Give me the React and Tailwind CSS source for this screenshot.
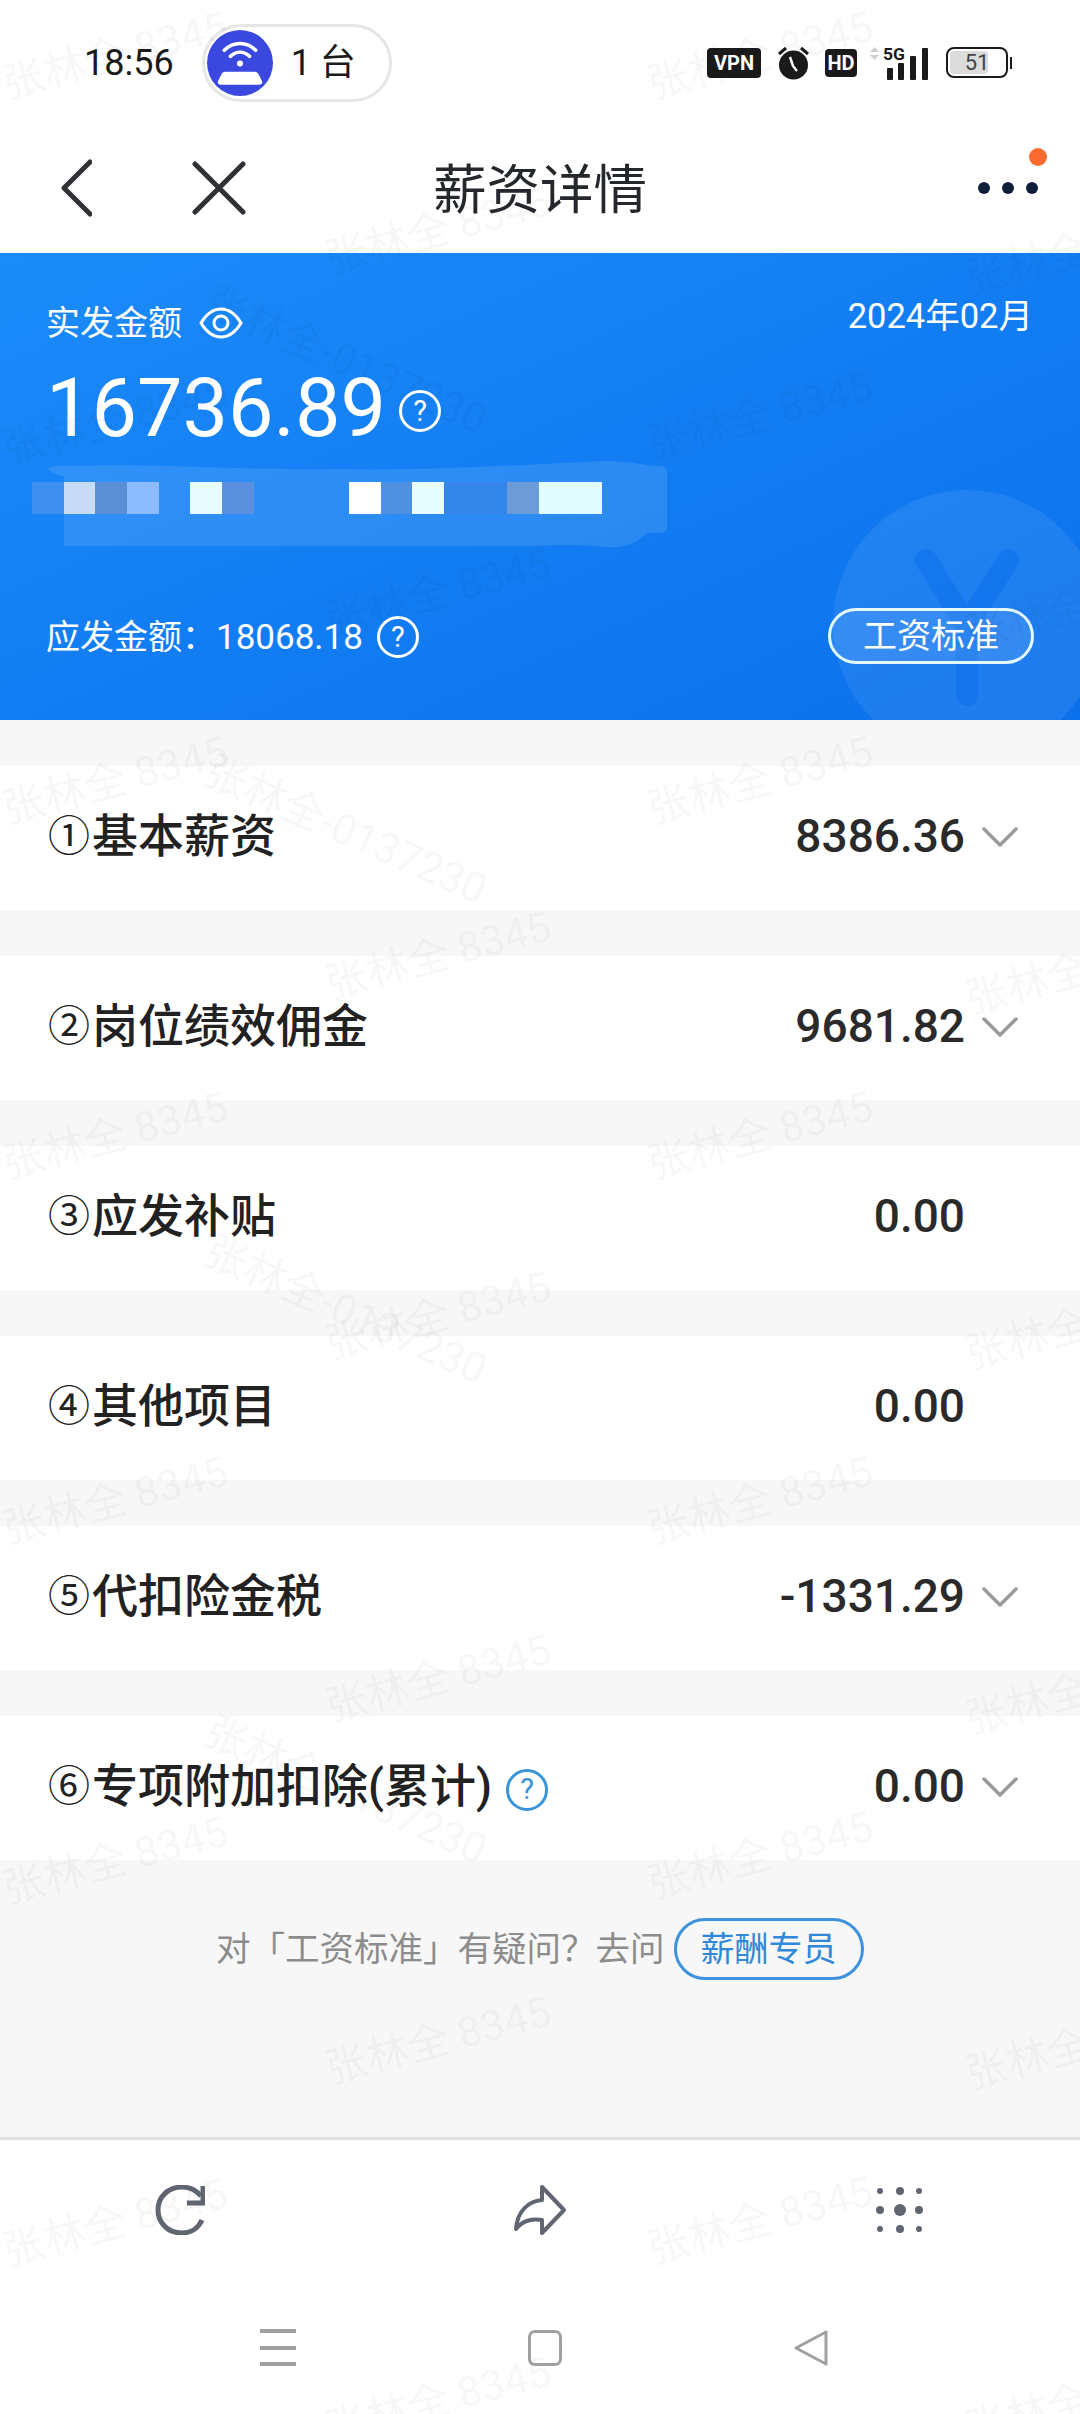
import React from "react";

const cjk = "font-['Roboto','Noto_Sans_CJK_SC',sans-serif]";

// left column / right column watermark centres, alternating rows
const marks = [
  [115, 55], [760, 55], [438, 230], [1078, 250], [115, 420], [760, 415], [438, 592], [1078, 605],
  [115, 780], [760, 780], [438, 955], [1078, 970], [115, 1135], [760, 1135], [438, 1315], [1078, 1325],
  [115, 1500], [760, 1500], [438, 1678], [1078, 1690], [115, 1860], [760, 1855], [438, 2040], [1078, 2045],
  [115, 2222], [760, 2220], [438, 2400], [1078, 2400],
];
const idMarks = [[346, 360], [346, 830], [346, 1310], [346, 1790]];

const rows = [
  { mark: "①", label: "基本薪资", value: "8386.36", open: true },
  { mark: "②", label: "岗位绩效佣金", value: "9681.82", open: true },
  { mark: "③", label: "应发补贴", value: "0.00" },
  { mark: "④", label: "其他项目", value: "0.00" },
  { mark: "⑤", label: "代扣险金税", value: "-1331.29", open: true },
  { mark: "⑥", label: "专项附加扣除(累计)", value: "0.00", open: true, help: true },
];

const cells = [
  "bg-[#3f8ff0]", "bg-[#c8dcf8]", "bg-[#5b8fd6]", "bg-[#8cbcff]", "bg-transparent", "bg-[#e8fcff]",
  "bg-[#5a90de]", "bg-transparent", "bg-transparent", "bg-transparent", "bg-[#ffffff]", "bg-[#4f90e0]",
  "bg-[#e8fdff]", "bg-[#3486ea]", "bg-[#3486ea]", "bg-[#6d9bd8]", "bg-[#e2fdff]", "bg-[#e2fdff]",
];

const Help = ({ className }) => (
  <span className={`flex h-[42px] w-[42px] shrink-0 items-center justify-center rounded-full border-[3px] text-[29px] leading-none font-['Roboto',sans-serif] ${className}`}>
    ?
  </span>
);

const Chevron = () => (
  <svg width="36" height="20" viewBox="0 0 36 20" fill="none" stroke="#9a9a9a" strokeWidth="3.5" strokeLinecap="round" strokeLinejoin="round">
    <path d="M2 2 18 18 34 2" />
  </svg>
);

const StatusIcons = () => (
  <div className="flex items-center">
    <span className="flex h-[30px] w-[54px] items-center justify-center rounded-[4px] bg-[#1a1a1a] text-[20px] font-bold text-white font-['Roboto',sans-serif]">VPN</span>
    <svg className="ml-[17px]" width="31" height="34" viewBox="0 0 31 34" fill="#1a1a1a">
      <circle cx="15.5" cy="19" r="14.5" />
      <path d="M12 11 15 20l4 5" fill="none" stroke="#fff" strokeWidth="2.5" />
      <path d="M1 8 8 2M30 8 23 2" stroke="#1a1a1a" strokeWidth="3" />
    </svg>
    <span className="ml-[16px] flex h-[28px] w-[32px] items-center justify-center rounded-[4px] bg-[#1a1a1a] text-[20px] font-bold text-white font-['Roboto',sans-serif]">HD</span>
    <svg className="ml-[13px]" width="59" height="34" viewBox="0 0 59 34" fill="#1a1a1a">
      <path d="M0 6 4.500 1 9 6ZM0 9 4.500 14 9 9Z" fill="#cfcfcf" />
      <rect x="17" y="22" width="6" height="12" rx="1" />
      <rect x="28" y="17" width="6" height="17" rx="1" />
      <rect x="40" y="10" width="6" height="24" rx="1" />
      <rect x="52" y="2" width="6" height="32" rx="1" />
      <text x="13" y="14" fontSize="17" fontWeight="700" fontFamily="Roboto" textLength="22" lengthAdjust="spacingAndGlyphs">5G</text>
    </svg>
    <div className="ml-[17px] flex items-center">
      <div className="relative flex h-[31px] w-[62px] items-center justify-center overflow-hidden rounded-[8px] border-[2px] border-[#1a1a1a] p-[2px]">
        <div className="absolute bottom-[2px] left-[2px] top-[2px] w-[38px] rounded-[4px] bg-[#dcdcdc]" />
        <span className="relative text-[22px] text-[#444] font-['Roboto',sans-serif]">51</span>
      </div>
      <div className="ml-[2px] h-[12px] w-[2px] bg-[#1a1a1a]" />
    </div>
  </div>
);

const Row = ({ mark, label, value, open, help }) => (
  <div className="mt-[46px] flex h-[144px] items-center justify-between bg-white pb-[3px] pl-[48px] pr-[62px]">
    <div className="flex items-center">
      <span className={`w-[44px] text-[42px] text-[#222] ${cjk}`}>{mark}</span>
      <span className={`text-[46px] font-medium text-[#222] ${cjk}`}>{label}</span>
      {help && <Help className="ml-[14px] mt-[6px] border-[#3a95d8] text-[#3a95d8]" />}
    </div>
    <div className="flex items-center">
      <span className="text-[46px] font-medium text-[#2a2a2a] font-['Roboto',sans-serif]">{value}</span>
      <div className="ml-[17px] flex w-[36px] justify-center">{open && <Chevron />}</div>
    </div>
  </div>
);

export default function App() {
  return (
    <div className={`relative flex h-[2414px] w-[1080px] flex-col overflow-hidden bg-[#f7f7f7] ${cjk}`}>
      <div className="bg-white">
        {/* status bar */}
        <div className="flex h-[124px] items-center justify-between pl-[84px] pr-[68px] pt-[1px]">
          <div className="flex items-center">
            <span className="text-[36px] text-[#1a1a1a]">18:56</span>
            <div className="ml-[28px] flex h-[78px] w-[190px] items-center rounded-full border-[3px] border-[#e6e6e6] pl-[2px]">
              <svg width="66" height="66" viewBox="0 0 65 65">
                <circle cx="32.500" cy="32.500" r="32.500" fill="#3a48e0" />
                <path d="M17 20c9-9 22-9 31 0M23 26c6-5.500 13-5.500 19 0" fill="none" stroke="#fff" strokeWidth="3.500" strokeLinecap="round" />
                <circle cx="32.500" cy="33" r="3" fill="#fff" />
                <path d="M18 41h29c2 0 3 1 4 3l3 6c1 2 0 4-3 4H14c-3 0-4-2-3-4l3-6c1-2 2-3 4-3Z" fill="#fff" />
              </svg>
              <span className="ml-[18px] text-[36px] text-[#1a1a1a]">1 台</span>
            </div>
          </div>
          <StatusIcons />
        </div>
        {/* nav bar */}
        <div className="relative flex h-[129px] items-center pl-[61px] pr-[42px]">
          <svg className="-mt-[2px]" width="31" height="58" viewBox="0 0 31 58" fill="none" stroke="#2f3337" strokeWidth="5" strokeLinecap="round" strokeLinejoin="round">
            <path d="M29 3 3 29l26 26" />
          </svg>
          <svg className="-mt-[2px] ml-[100px]" width="54" height="54" viewBox="0 0 54 54" fill="none" stroke="#2f3337" strokeWidth="5" strokeLinecap="round">
            <path d="M3 3 51 51M51 3 3 51" />
          </svg>
          <span className="ml-[187px] mt-[4px] text-[53.500px] leading-none text-[#24282c]">薪资详情</span>
          <div className="-mt-[2px] ml-auto flex gap-[12px]">
            <span className="h-[12px] w-[12px] rounded-full bg-[#10203a]" />
            <span className="h-[12px] w-[12px] rounded-full bg-[#10203a]" />
            <span className="h-[12px] w-[12px] rounded-full bg-[#10203a]" />
          </div>
          <span className="absolute right-[33px] top-[24px] h-[18px] w-[18px] rounded-full bg-[#fb6a2f]" />
        </div>
      </div>

      {/* blue summary */}
      <div className="relative h-[467px] overflow-hidden bg-gradient-to-br from-[#1b8bfa] to-[#0b70ec] px-[46px] text-white">
        <svg className="absolute left-[833px] top-[237px]" width="268" height="268" viewBox="0 0 268 268" fill="none">
          <circle cx="134" cy="134" r="134" fill="#ffffff" fillOpacity="0.08" />
          <path d="M93 70 134 135 175 70M134 135V205" stroke="#0b70ec" strokeOpacity="0.55" strokeWidth="22" strokeLinecap="round" strokeLinejoin="round" />
        </svg>
        <svg className="absolute left-[47px] top-[208px]" width="625" height="95" viewBox="0 0 625 95" fill="#ffffff" fillOpacity="0.11">
          <path d="M0 8C2 6 10 4 17 5 120 2 200 10 290 8 380 10 470 4 560 0 590 1 600 5 612 5 618 5 620 8 620 12V66C620 70 617 72 612 72H600C590 82 575 88 560 86 540 84 520 84 480 85H17V15Q8 14 0 8Z" />
        </svg>

        <div className="relative flex items-center justify-between pt-[43px]">
          <div className="flex items-center">
            <span className="text-[34px] leading-[54px]">实发金额</span>
            <svg className="ml-[17px]" width="44" height="32" viewBox="0 0 44 32" fill="none" stroke="#fff" strokeWidth="3">
              <path d="M2 16C8 6 15 2 22 2s14 4 20 14c-6 10-13 14-20 14S8 26 2 16Z" />
              <circle cx="22" cy="16" r="7" />
            </svg>
          </div>
          <span className="-mt-[14px] mr-[1px] text-[34.500px] leading-none">2024年02月</span>
        </div>
        <div className="relative mt-[12px] flex items-center">
          <span className="text-[81px] leading-[94px] font-['Roboto',sans-serif]">16736.89</span>
          <Help className="ml-[13px] mt-[4px] border-white text-white" />
        </div>

        {/* redacted line */}
        <div className="relative -ml-[14px] mt-[26px] flex h-[32px]">
          {cells.map((c, i) => (
            <span key={i} className={`h-full w-[31.700px] ${c}`} />
          ))}
        </div>

        <div className="relative mt-[94px] flex items-center justify-between">
          <div className="flex items-center">
            <span className="mt-[2px] text-[34px] leading-none">应发金额：</span>
            <span className="mt-[2px] text-[35px] leading-none font-['Roboto',sans-serif]">18068.18</span>
            <Help className="ml-[14px] mt-[2px] border-white text-white" />
          </div>
          <span className="flex h-[56px] w-[206px] items-center justify-center rounded-full border-[3px] border-[#e4fbff] bg-white/10 text-[34px] leading-none">
            工资标准
          </span>
        </div>
      </div>

      {/* pay rows */}
      <div className="flex flex-1 flex-col">
        {rows.map((r) => (
          <Row key={r.label} {...r} />
        ))}
        <div className="mt-[58px] flex items-center pl-[216px]">
          <span className="text-[34.500px] leading-none text-[#8c8c8c]">对「工资标准」有疑问？去问</span>
          <span className="ml-[9px] flex h-[62px] w-[190px] items-center justify-center rounded-full border-[3px] border-[#3d92db] text-[34px] leading-none text-[#2f88d8]">
            薪酬专员
          </span>
        </div>
      </div>

      {/* toolbar + system nav */}
      <div className="h-[277px] border-t-[3px] border-[#e2e2e2] bg-white">
        <div className="flex h-[139px] items-center justify-between px-[155px]">
          <svg width="50" height="50" viewBox="0 0 50 50" fill="none" stroke="#5f6672" strokeWidth="5">
            <path d="M47 35C43 44 35 48 27 48 13 48 3 38 3 25S13 2 27 2c7 0 14 3 19 9" />
            <path d="M48 1V18H32" strokeWidth="5" />
          </svg>
          <svg width="52" height="50" viewBox="0 0 52 50" fill="none" stroke="#5f6672" strokeWidth="4" strokeLinejoin="round">
            <path d="M28 2 50 25 28 48V35C18 33 8 36 2 44 3 27 14 16 28 15Z" />
          </svg>
          <svg width="50" height="50" viewBox="0 0 50 50" fill="#5f6672">
            <circle cx="5" cy="6" r="3" /><circle cx="25" cy="6" r="4" /><circle cx="44" cy="6" r="3" />
            <circle cx="5" cy="25" r="4" /><circle cx="25" cy="25" r="6" /><circle cx="44" cy="25" r="4" />
            <circle cx="5" cy="44" r="3" /><circle cx="25" cy="44" r="4" /><circle cx="44" cy="44" r="3" />
          </svg>
        </div>
        <div className="flex items-center justify-between pl-[260px] pr-[252px] pt-[50px]">
          <div className="flex h-[37px] w-[36px] flex-col justify-between">
            <span className="h-[4px] bg-[#a0a0a0]" />
            <span className="h-[4px] bg-[#a0a0a0]" />
            <span className="h-[4px] bg-[#a0a0a0]" />
          </div>
          <span className="h-[36px] w-[34px] rounded-[7px] border-[3px] border-[#a0a0a0]" />
          <svg width="34" height="36" viewBox="0 0 34 36" fill="none" stroke="#a0a0a0" strokeWidth="3" strokeLinejoin="round">
            <path d="M32 2V34L2 18Z" />
          </svg>
        </div>
      </div>

      {/* watermark layer */}
      <div className="pointer-events-none absolute inset-0 overflow-hidden">
        {marks.map(([x, y]) => (
          <span
            key={`${x}-${y}`}
            className="absolute -translate-x-1/2 -translate-y-1/2 -rotate-[15deg] whitespace-nowrap text-[42px] text-black/[0.05]"
            style={{ left: x, top: y }}
          >
            张林全 8345
          </span>
        ))}
        {idMarks.map(([x, y]) => (
          <span
            key={`${x}-${y}`}
            className="absolute -translate-x-1/2 -translate-y-1/2 rotate-[24deg] whitespace-nowrap text-[42px] text-black/[0.05]"
            style={{ left: x, top: y }}
          >
            张林全-0137230
          </span>
        ))}
      </div>
    </div>
  );
}
